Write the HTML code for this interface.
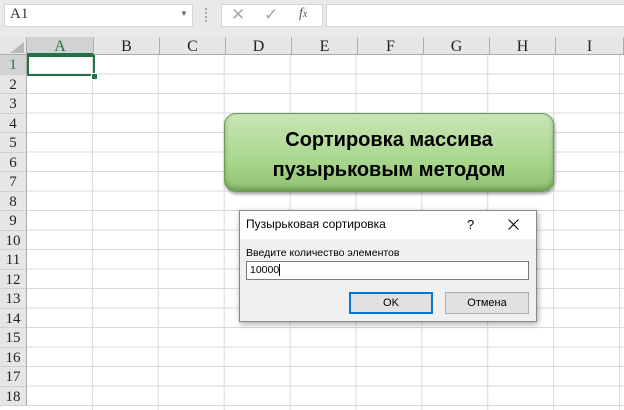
<!DOCTYPE html>
<html><head><meta charset="utf-8"><style>
body{margin:0;width:624px;height:410px;overflow:hidden;background:#fff;position:relative;font-family:"Liberation Serif",serif}
.a{position:absolute}
.top{left:0;top:0;width:624px;height:37px;background:#e9e9e9}
.box{background:#fff;border:1px solid #d4d4d4}
.grid{left:27px;top:55px;width:597px;height:355px;background-image:linear-gradient(to right,#dadada 1px,transparent 1px),linear-gradient(#dadada 1px,transparent 1px);background-size:65.9px 100%,100% 19.5px;background-position:-1px 0,0 -1px}
.ch{top:37px;height:18px;background:#e6e6e6;border-bottom:1px solid #ababab;font-size:16px;text-align:center;line-height:19px;color:#222;border-right:1px solid #ababab;box-sizing:border-box}
.rh{left:0;width:27px;height:19.5px;background:#e6e6e6;border-right:1px solid #ababab;box-sizing:border-box;font-size:15px;text-align:center;line-height:20px;color:#222;border-bottom:1px solid #d0d0d0}
.s{font-family:"Liberation Sans",sans-serif}
</style></head><body>
<div class="a top"></div>
<div class="a box" style="left:4px;top:4px;width:187px;height:21px"></div>
<div class="a" style="left:10px;top:6px;font-size:15px;color:#333">A1</div>
<div class="a s" style="left:180px;top:9px;font-size:8px;color:#666">▼</div>
<div class="a" style="left:205px;top:8px;width:2px;height:14px;border-left:2px dotted #aaa"></div>
<div class="a box" style="left:221px;top:4px;width:100px;height:21px"></div>
<div class="a s" style="left:231px;top:5px;font-size:17px;color:#aaa">✕</div>
<div class="a s" style="left:264px;top:5px;font-size:17px;color:#aaa">✓</div>
<div class="a" style="left:299px;top:6px;font-size:14px;font-style:italic;color:#555">f<span style="font-size:10px">x</span></div>
<div class="a box" style="left:326px;top:4px;width:300px;height:21px"></div>
<div class="a grid"></div>
<div class="a" style="left:0;top:37px;width:27px;height:18px;background:#e6e6e6;border-right:1px solid #ababab;border-bottom:1px solid #ababab;box-sizing:border-box"></div>
<div class="a" style="left:10px;top:42px;width:0;height:0;border-left:14px solid transparent;border-bottom:11px solid #b8b8b8"></div>
<div class="a ch" style="left:27px;width:67px;background:#d2d2d2;color:#217346;border-bottom:2px solid #217346">A</div>
<div class="a ch" style="left:94px;width:66px">B</div>
<div class="a ch" style="left:160px;width:66px">C</div>
<div class="a ch" style="left:226px;width:66px">D</div>
<div class="a ch" style="left:292px;width:66px">E</div>
<div class="a ch" style="left:358px;width:66px">F</div>
<div class="a ch" style="left:424px;width:66px">G</div>
<div class="a ch" style="left:490px;width:66px">H</div>
<div class="a ch" style="left:556px;width:68px">I</div>
<div class="a rh" style="top:55px;background:#d2d2d2;color:#217346">1</div>
<div class="a rh" style="top:74.5px">2</div><div class="a rh" style="top:94px">3</div><div class="a rh" style="top:113.5px">4</div><div class="a rh" style="top:133px">5</div><div class="a rh" style="top:152.5px">6</div><div class="a rh" style="top:172px">7</div><div class="a rh" style="top:191.5px">8</div><div class="a rh" style="top:211px">9</div><div class="a rh" style="top:230.5px">10</div><div class="a rh" style="top:250px">11</div><div class="a rh" style="top:269.5px">12</div><div class="a rh" style="top:289px">13</div><div class="a rh" style="top:308.5px">14</div><div class="a rh" style="top:328px">15</div><div class="a rh" style="top:347.5px">16</div><div class="a rh" style="top:367px">17</div><div class="a rh" style="top:386.5px">18</div>
<div class="a" style="left:27px;top:55px;width:68px;height:21px;border:2px solid #217346;box-sizing:border-box"></div>
<div class="a" style="left:91px;top:73px;width:5px;height:5px;background:#217346;border:1px solid #fff"></div>
<div class="a s" style="left:224px;top:113px;width:330px;height:79px;border-radius:12px;background:linear-gradient(#c9e5b5,#a9d78e 60%,#8fc072);border:1px solid #6e9a56;box-shadow:1px 2px 3px rgba(0,0,0,.4),inset 0 -3px 4px rgba(60,100,40,.4);box-sizing:border-box;text-align:center;font-weight:bold;font-size:20px;line-height:30px;padding-top:11px;color:#000">Сортировка массива<br>пузырьковым методом</div>
<div class="a s" style="left:239px;top:210px;width:298px;height:112px;background:#f0f0f0;border:1px solid #888;box-shadow:1px 2px 6px rgba(0,0,0,.35);box-sizing:border-box">
<div class="a" style="left:0;top:0;width:296px;height:28px;background:#fff"></div>
<div class="a" style="left:6px;top:6px;font-size:12px;color:#000">Пузырьковая сортировка</div>
<div class="a" style="left:227px;top:6px;font-size:13px">?</div>
<svg class="a" style="left:268px;top:8px" width="11" height="11"><path d="M0.5 0.5L10.5 10.5M10.5 0.5L0.5 10.5" stroke="#000" stroke-width="1.1"/></svg>
<div class="a" style="left:6px;top:36px;font-size:10.5px">Введите количество элементов</div>
<div class="a" style="left:6px;top:50px;width:283px;height:19px;background:#fff;border:1px solid #7a7a7a;box-sizing:border-box;font-size:10.5px;line-height:17px;padding-left:3px"><span style="border-right:1px solid #000">10000</span></div>
<div class="a" style="left:109px;top:81px;width:84px;height:22px;background:#e1e1e1;border:2px solid #0078d7;box-sizing:border-box;text-align:center;font-size:11px;line-height:18px">OK</div>
<div class="a" style="left:205px;top:81px;width:84px;height:22px;background:#e1e1e1;border:1px solid #adadad;box-sizing:border-box;text-align:center;font-size:11px;line-height:20px">Отмена</div>
</div>
</body></html>
